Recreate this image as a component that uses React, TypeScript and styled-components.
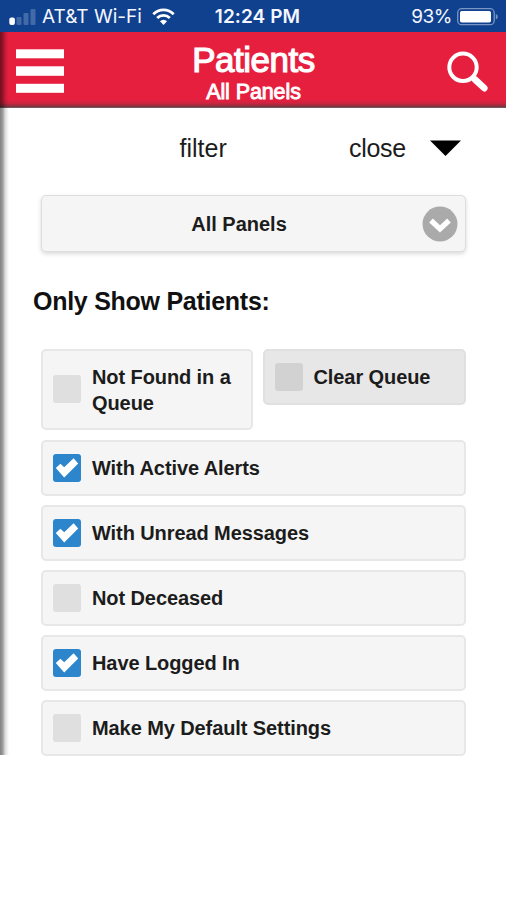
import React from "react";
import styled, { createGlobalStyle } from "styled-components";

const Global = createGlobalStyle`
  * { box-sizing: border-box; }
  body { margin: 0; background: #fff; }
`;

const Screen = styled.div`
  width: 506px;
  height: 900px;
  overflow: hidden;
  background: #fff;
  color: #1c1c1c;
  font-family: "Liberation Sans", Arial, sans-serif;
`;

const StatusBar = styled.div`
  height: 32px;
  background: #10418f;
  color: #f4f7ff;
  display: grid;
  grid-template-columns: 1fr auto 1fr;
  align-items: center;
  padding: 1px 8px 0 9px;
  font: 500 19px/30px Inter, sans-serif;
  white-space: nowrap;
`;

const StatusGroup = styled.div<{ $end?: boolean }>`
  display: flex;
  align-items: center;
  justify-content: ${(p) => (p.$end ? "flex-end" : "flex-start")};
`;

const Carrier = styled.span`
  margin: 0 10px 0 6px;
  font-size: 19px;
  font-weight: 400;
  letter-spacing: 0.02px;
`;

const Clock = styled.span`
  font-weight: 600;
  font-size: 19px;
  letter-spacing: 0.1px;
  margin-left: 8px;
`;

const Percent = styled.span`
  font-weight: 400;
  font-size: 19px;
  letter-spacing: -0.5px;
  margin-right: 5px;
`;

const AppShell = styled.div`
  position: relative;
  height: 723px;
`;

const EdgeShadow = styled.div`
  position: absolute;
  left: 0;
  top: 0;
  bottom: 0;
  width: 9px;
  background: linear-gradient(to right, rgba(0, 0, 0, 0.5), rgba(0, 0, 0, 0.38) 30%, rgba(0, 0, 0, 0.13) 60%, transparent);
`;

const Header = styled.header`
  height: 76px;
  background: linear-gradient(to bottom, #e71f3f 0 67px, #cf2440 71px, #a52a3e 73px, #713840 75px, #777 76px);
  display: grid;
  grid-template-columns: 66px 1fr 66px;
  align-items: center;
  color: #fff;
  padding: 0 14px 0 14px;
`;

const Title = styled.h1`
  margin: 0;
  font-size: 35px;
  line-height: 36px;
  font-weight: 400;
  letter-spacing: -0.5px;
  -webkit-text-stroke: 1.2px #fff;
`;

const Subtitle = styled.div`
  font-size: 21.5px;
  line-height: 28px;
  letter-spacing: -0.1px;
  -webkit-text-stroke: 0.9px #fff;
`;

const TitleBlock = styled.div`
  text-align: center;
  padding: 7px 0 0 1px;
`;

const IconButton = styled.button<{ $end?: boolean }>`
  border: 0;
  padding: 0;
  background: none;
  display: flex;
  justify-content: ${(p) => (p.$end ? "flex-end" : "flex-start")};
`;

const FilterRow = styled.div`
  height: 87px;
  padding: 0 45px 7px 179.5px;
  display: flex;
  align-items: center;
  font-size: 25px;
`;

const CloseLabel = styled.span`
  margin: 0 24px 0 auto;
  letter-spacing: -0.25px;
`;

const Content = styled.main`
  padding: 0 40px 0 41px;
`;

const PanelSelect = styled.button`
  width: 100%;
  height: 57px;
  border: 1.5px solid #ddd;
  border-radius: 5px;
  background: #f5f5f5;
  box-shadow: 0 2px 4px rgba(0, 0, 0, 0.15);
  display: grid;
  grid-template-columns: 35px 1fr 36px;
  align-items: center;
  padding: 0 7px;
  color: #1c1c1c;
  font: 700 20px "Liberation Sans", Arial, sans-serif;
`;

const SelectText = styled.span`
  padding: 2px 28px 0 0;
`;

const Heading = styled.h2`
  margin: 34px 0 0 -8px;
  height: 63px;
  font-size: 25px;
  line-height: 30px;
  letter-spacing: -0.27px;
  color: #111;
`;

const OptionGrid = styled.div`
  display: grid;
  grid-template-columns: 212px 1fr;
  column-gap: 9.5px;
  row-gap: 9px;
  align-items: start;
`;

const Option = styled.div<{ $wide?: boolean; $tall?: boolean; $dark?: boolean }>`
  grid-column: ${(p) => (p.$wide ? "1 / -1" : "auto")};
  height: ${(p) => (p.$tall ? 81 : 56)}px;
  margin-bottom: ${(p) => (p.$tall ? 1 : 0)}px;
  padding: 0 11px;
  display: flex;
  align-items: center;
  gap: 11px;
  border: 2px solid ${(p) => (p.$dark ? "#e0e0e0" : "#e7e7e7")};
  border-radius: 5px;
  background: ${(p) => (p.$dark ? "#e7e7e7" : "#f5f5f5")};
  font-size: 20px;
  line-height: 25.5px;
  font-weight: 700;
  white-space: ${(p) => (p.$tall ? "normal" : "nowrap")};
`;

const Check = styled.span<{ $on?: boolean; $dark?: boolean }>`
  flex: 0 0 28px;
  height: 28px;
  margin: -1px 0 0 -1px;
  border-radius: 3px;
  display: flex;
  background: ${(p) => (p.$on ? "#2d86cc" : p.$dark ? "#d2d2d2" : "#dfdfdf")};
`;

const OptionLabel = styled.span`
  padding-top: 2px;
  letter-spacing: -0.09px;
`;

const CheckMark = () => (
  <svg width="28" height="28" viewBox="0 0 28 28">
    <path d="M2.8 14 7.4 9.8l3.8 3.4L20.6 4.2l4.6 5.2L11.2 23.6Z" fill="#fff" />
  </svg>
);

const options = [
  { label: "Not Found in a Queue", tall: true },
  { label: "Clear Queue", dark: true },
  { label: "With Active Alerts", wide: true, on: true },
  { label: "With Unread Messages", wide: true, on: true },
  { label: "Not Deceased", wide: true },
  { label: "Have Logged In", wide: true, on: true },
  { label: "Make My Default Settings", wide: true },
];

export default function App() {
  return (
    <Screen>
      <Global />
      <StatusBar>
        <StatusGroup>
          <svg width="27" height="18" viewBox="0 0 27 18">
            <g fill="#6484b9">
              <rect x="7.5" y="9" width="5" height="8" rx="1.2" opacity=".6" />
              <rect x="14.5" y="5" width="5" height="12" rx="1.2" opacity=".6" />
              <rect x="21.5" y="1" width="5" height="16" rx="1.2" opacity=".6" />
            </g>
            <rect x="0.3" y="9.5" width="5.6" height="7.5" rx="2" fill="#fff" />
          </svg>
          <Carrier>AT&amp;T Wi-Fi</Carrier>
          <svg width="23" height="18" viewBox="0 0 23 18">
            <g fill="none" stroke="#fff" strokeWidth="2.8">
              <path d="M1.3 6.2a14.3 14.3 0 0 1 20.4 0" />
              <path d="M5.2 10.1a8.8 8.8 0 0 1 12.6 0" />
            </g>
            <path d="M8 13.2a4.8 4.8 0 0 1 7 0L11.5 17Z" fill="#fff" />
          </svg>
        </StatusGroup>
        <Clock>12:24 PM</Clock>
        <StatusGroup $end>
          <Percent>93%</Percent>
          <svg width="41" height="18" viewBox="0 0 41 18">
            <rect x=".7" y=".7" width="36.5" height="16" rx="4" fill="none" stroke="#7895c4" strokeWidth="1.3" />
            <rect x="3" y="3" width="31" height="11.5" rx="1.8" fill="#fff" />
            <path d="M38.8 6v5.5q2-.7 2-2.7T38.8 6Z" fill="#7895c4" />
          </svg>
        </StatusGroup>
      </StatusBar>
      <AppShell>
        <Header>
          <IconButton aria-label="Menu">
            <svg width="52" height="46" viewBox="0 0 52 46" fill="#fff">
              <rect x="2" y="2.3" width="48" height="9" />
              <rect x="2" y="19.3" width="48" height="9.5" />
              <rect x="2" y="36.8" width="48" height="9" />
            </svg>
          </IconButton>
          <TitleBlock>
            <Title>Patients</Title>
            <Subtitle>All Panels</Subtitle>
          </TitleBlock>
          <IconButton $end aria-label="Search">
            <svg width="46" height="46" viewBox="0 0 46 46" fill="none" stroke="#fff">
              <circle cx="17" cy="20.3" r="13.7" strokeWidth="4" />
              <path d="m25.5 29 4 4" strokeWidth="5" />
              <path d="m29 32.5 9.3 8.7" strokeWidth="6.6" strokeLinecap="round" />
            </svg>
          </IconButton>
        </Header>
        <FilterRow>
          <span>filter</span>
          <CloseLabel>close</CloseLabel>
          <svg width="31" height="16" viewBox="0 0 31 16">
            <path d="M0 0.5h31L15.5 16Z" fill="#000" />
          </svg>
        </FilterRow>
        <Content>
          <PanelSelect>
            <span />
            <SelectText>All Panels</SelectText>
            <svg width="36" height="36" viewBox="0 0 36 36">
              <circle cx="18" cy="18" r="17.5" fill="#aaa" />
              <path d="m9 14.5 9 8.5 9-8.5" fill="none" stroke="#fff" strokeWidth="5.2" />
            </svg>
          </PanelSelect>
          <Heading>Only Show Patients:</Heading>
          <OptionGrid>
            {options.map((o) => (
              <Option key={o.label} $wide={o.wide} $tall={o.tall} $dark={o.dark}>
                <Check $on={o.on} $dark={o.dark}>{o.on && <CheckMark />}</Check>
                <OptionLabel>{o.label}</OptionLabel>
              </Option>
            ))}
          </OptionGrid>
        </Content>
        <EdgeShadow />
      </AppShell>
    </Screen>
  );
}
